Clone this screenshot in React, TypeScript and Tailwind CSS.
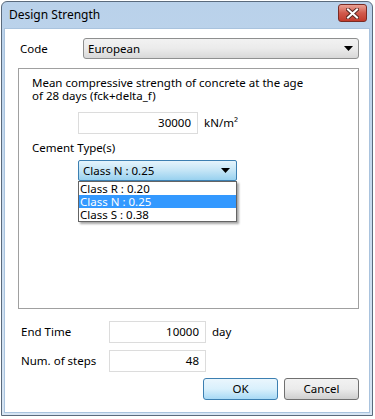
const font = { fontFamily: '"Noto Sans", "Open Sans", sans-serif' };

function Input({ value, w }: { value: string; w: string }) {
  return (
    <div className={`${w} h-[22px] border border-[#dcdcdc] bg-white flex items-center justify-end pr-[6px] text-black`}>
      {value}
    </div>
  );
}

function Arrow() {
  return (
    <svg width="9" height="5" viewBox="0 0 9 5">
      <path d="M0 0h9L4.5 5z" fill="#000" />
    </svg>
  );
}

export default function App() {
  return (
    <div className="w-[375px] h-[419px] bg-white text-[11.5px] text-black" style={font}>
      <div className="ml-[1px] mt-[1px] w-[372px] h-[415px] border border-[#5a6a7c] rounded-t-[6px] bg-gradient-to-b from-[#b9d1ea] to-[#d7e5f3] flex flex-col">
        {/* title bar */}
        <div className="h-[26px] flex items-center justify-between pl-[7px] pr-[5px]">
          <span className="text-[12px] text-black">Design Strength</span>
          <div className="w-[29px] h-[18px] mt-[-4px] rounded-[3px] border border-[#7a2b24] bg-gradient-to-b from-[#e9a195] via-[#d15a4c] to-[#c23b2c] flex items-center justify-center">
            <svg width="13" height="11" viewBox="0 0 13 11">
              <path d="M2 1.5l9 8M11 1.5l-9 8" stroke="#5a2a24" strokeWidth="4" strokeLinecap="square" />
              <path d="M2 1.5l9 8M11 1.5l-9 8" stroke="#fff" strokeWidth="2" strokeLinecap="square" />
            </svg>
          </div>
        </div>

        {/* client area */}
        <div className="flex-1 mx-[2px] mb-[2px] bg-white border border-[#a9c3de] pl-[13px] pr-[10px] pt-[9px]">
          <div className="flex items-center h-[21px]">
            <span className="w-[65px] pl-[2px]">Code</span>
            <div className="flex-1 h-[21px] rounded-[3px] border border-[#8e8f8f] bg-gradient-to-b from-[#f2f2f2] via-[#ebebeb] to-[#d8d8d8] flex items-center justify-between pl-[4px] pr-[5px]">
              <span>European</span>
              <Arrow />
            </div>
          </div>

          <div className="mt-[9px] h-[241px] border border-[#a0a0a0] pl-[13px] pt-[7px]">
            <p className="leading-[13px]">
              Mean compressive strength of concrete at the age
              <br />
              of 28 days (fck+delta_f)
            </p>
            <div className="flex items-center mt-[10px] ml-[46px]">
              <Input value="30000" w="w-[120px]" />
              <span className="ml-[6px]">kN/m²</span>
            </div>
            <p className="mt-[6px] leading-[16px]">Cement Type(s)</p>
            <div className="ml-[46px] mt-[4px] w-[159px]">
              <div className="h-[21px] rounded-[2px] border border-[#3c7fb1] bg-gradient-to-b from-[#e5f4fc] via-[#c4e5f6] to-[#98d1ef] flex items-center justify-between pl-[4px] pr-[6px]">
                <span>Class N : 0.25</span>
                <Arrow />
              </div>
              <div className="border border-[#646464] bg-white shadow-[2px_2px_2px_rgba(0,0,0,0.35)]">
                <div className="pl-[1px] h-[13px] leading-[13px]">Class R : 0.20</div>
                <div className="pl-[1px] h-[13px] leading-[13px] bg-[#3399ff] text-white">Class N : 0.25</div>
                <div className="pl-[1px] h-[13px] leading-[13px]">Class S : 0.38</div>
              </div>
            </div>
          </div>

          <div className="mt-[12px] flex items-center">
            <span className="w-[91px] pl-[3px]">End Time</span>
            <Input value="10000" w="w-[97px]" />
            <span className="ml-[6px]">day</span>
          </div>
          <div className="mt-[7px] flex items-center">
            <span className="w-[91px] pl-[3px]">Num. of steps</span>
            <Input value="48" w="w-[97px]" />
          </div>
          <div className="mt-[6px] flex justify-end gap-[6px]">
            <div className="w-[75px] h-[22px] rounded-[3px] border border-[#3c7fb1] bg-gradient-to-b from-[#eaf6fd] via-[#d9f0fc] to-[#a7d9f5] flex items-center justify-center">
              OK
            </div>
            <div className="w-[75px] h-[22px] rounded-[3px] border border-[#707070] bg-gradient-to-b from-[#f2f2f2] via-[#ebebeb] to-[#cfcfcf] flex items-center justify-center">
              Cancel
            </div>
          </div>
        </div>
      </div>
    </div>
  );
}
